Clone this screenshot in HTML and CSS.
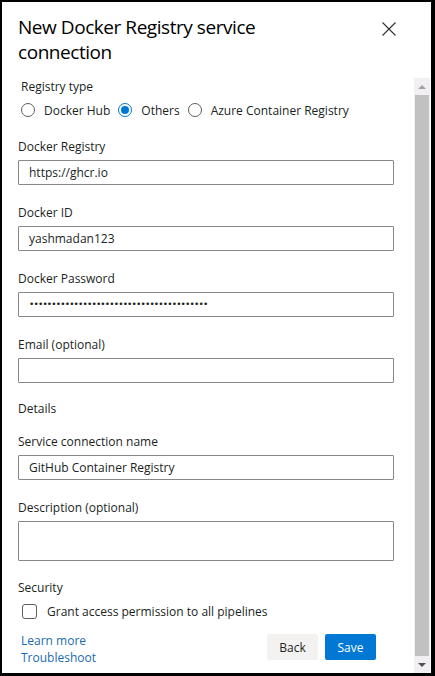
FILE: index.html
```html
<!DOCTYPE html>
<html lang="en">
<head>
<meta charset="utf-8">
<title>New Docker Registry service connection</title>
<link rel="stylesheet" href="styles.css">
</head>
<body>
<div class="frame">
  <header class="header">
    <h1 class="title">New Docker Registry service connection</h1>
    <button class="close" aria-label="Close">
      <svg width="14" height="14" viewBox="0 0 14 14"><path d="M0.5 0.5 L13.5 13.5 M13.5 0.5 L0.5 13.5" stroke="#323130" stroke-width="1.1" fill="none"/></svg>
    </button>
  </header>
  <div class="body">
    <div class="content">
      <div class="label indent">Registry type</div>
      <div class="radios">
        <label class="radio"><span class="dot"></span>Docker Hub</label>
        <label class="radio checked"><span class="dot"></span>Others</label>
        <label class="radio"><span class="dot"></span>Azure Container Registry</label>
      </div>

      <div class="field">
        <div class="label">Docker Registry</div>
        <div class="input">https://ghcr.io</div>
      </div>
      <div class="field">
        <div class="label">Docker ID</div>
        <div class="input">yashmadan123</div>
      </div>
      <div class="field">
        <div class="label">Docker Password</div>
        <div class="input password">••••••••••••••••••••••••••••••••••••••••</div>
      </div>
      <div class="field">
        <div class="label">Email (optional)</div>
        <div class="input"></div>
      </div>

      <div class="section">Details</div>
      <div class="field">
        <div class="label">Service connection name</div>
        <div class="input">GitHub Container Registry</div>
      </div>
      <div class="field">
        <div class="label">Description (optional)</div>
        <div class="input textarea"></div>
      </div>

      <div class="label">Security</div>
      <label class="check"><span class="box"></span>Grant access permission to all pipelines</label>

      <div class="footer">
        <div class="links">
          <a href="#">Learn more</a>
          <a href="#">Troubleshoot</a>
        </div>
        <div class="buttons">
          <button class="btn">Back</button>
          <button class="btn primary">Save</button>
        </div>
      </div>
    </div>
    <div class="scrollbar">
      <div class="arrow up"></div>
      <div class="thumb"></div>
      <div class="arrow down"></div>
    </div>
  </div>
</div>
</body>
</html>
```
FILE: styles.css
```css
* { box-sizing: border-box; }
html, body { margin: 0; padding: 0; }
body {
  width: 435px;
  height: 676px;
  background: #000;
  font-family: "Open Sans", "Noto Sans", sans-serif;
  color: #201f1e;
}
.frame {
  width: 435px;
  height: 676px;
  border-style: solid;
  border-color: #000;
  border-width: 2px 4px 3px 2px;
  background: #fff;
  display: flex;
  flex-direction: column;
}
.header {
  display: flex;
  justify-content: space-between;
  align-items: flex-start;
  padding: 13px 35px 12px 16px;
  height: 76px;
}
.title {
  margin: 0;
  font-size: 19px;
  font-weight: 400;
  line-height: 25px;
  color: #000;
  width: 260px;
  letter-spacing: -0.45px;
}
.close {
  border: 0;
  background: none;
  padding: 0;
  margin-top: 7px;
  width: 14px;
  height: 14px;
  display: flex;
}
.body {
  flex: 1;
  display: flex;
  min-height: 0;
}
.content {
  flex: 1;
  padding: 0 20px 0 16px;
  display: flex;
  flex-direction: column;
}
.label, .section {
  font-size: 12px;
  line-height: 18px;
  color: #201f1e;
}
.indent { padding-left: 3px; }
.radios {
  display: flex;
  gap: 8px;
  padding-left: 3px;
  margin-top: 5px;
  height: 18px;
  align-items: center;
}
.radio {
  display: flex;
  align-items: center;
  font-size: 12px;
  color: #201f1e;
}
.radio .dot {
  width: 14px;
  height: 14px;
  border-radius: 50%;
  border: 1px solid #605e5c;
  margin-right: 9px;
  position: relative;
}
.radio.checked .dot { border-color: #0078d4; }
.radio.checked .dot::after {
  content: "";
  position: absolute;
  left: 2px; top: 2px;
  width: 8px; height: 8px;
  border-radius: 50%;
  background: #0078d4;
}
.field { display: flex; flex-direction: column; }
.radios + .field { margin-top: 19px; }
.field + .field { margin-top: 19px; }
.field .label { margin-bottom: 4px; }
.input {
  height: 25px;
  border: 1px solid #8a8886;
  border-radius: 1px;
  font-size: 12px;
  line-height: 23px;
  padding: 0 10px;
  color: #201f1e;
}
.input.password {
  font-size: 9px;
  letter-spacing: -0.85px;
  font-family: "DejaVu Sans", sans-serif;
}
.input.textarea { height: 40px; }
.field + .section { margin-top: 17px; }
.section + .field { margin-top: 15px; }
.field + .label { margin-top: 18px; }
.check {
  display: flex;
  align-items: center;
  font-size: 12px;
  margin-top: 5px;
  padding-left: 4px;
  height: 18px;
}
.check .box {
  width: 15px;
  height: 15px;
  border: 1px solid #605e5c;
  border-radius: 3px;
  margin-right: 10px;
}
.footer {
  display: flex;
  justify-content: space-between;
  align-items: flex-start;
  margin-top: 12px;
  padding-left: 3px;
}
.links { display: flex; flex-direction: column; }
.links a {
  font-size: 12px;
  line-height: 17px;
  color: #1a6bb0;
  text-decoration: none;
}
.buttons {
  display: flex;
  gap: 7px;
  margin-right: 18px;
  margin-top: 2px;
}
.btn {
  width: 51px;
  height: 26px;
  border: 0;
  border-radius: 2px;
  background: #f3f2f1;
  font-family: inherit;
  font-size: 12px;
  color: #201f1e;
  padding: 0;
}
.btn.primary { background: #0078d4; color: #fff; }
.scrollbar {
  width: 16px;
  margin-right: 1px;
  background: #f2eff3;
  display: flex;
  flex-direction: column;
  align-items: center;
}
.arrow {
  height: 17px;
  width: 100%;
  display: flex;
  align-items: center;
  justify-content: center;
}
.arrow::before {
  content: "";
  border-left: 4px solid transparent;
  border-right: 4px solid transparent;
}
.arrow.up::before { border-bottom: 4px solid #a3a3a3; }
.arrow.down::before { border-top: 4px solid #505050; }
.thumb {
  flex: 1;
  width: 14px;
  background: #c1c1c1;
}
```
